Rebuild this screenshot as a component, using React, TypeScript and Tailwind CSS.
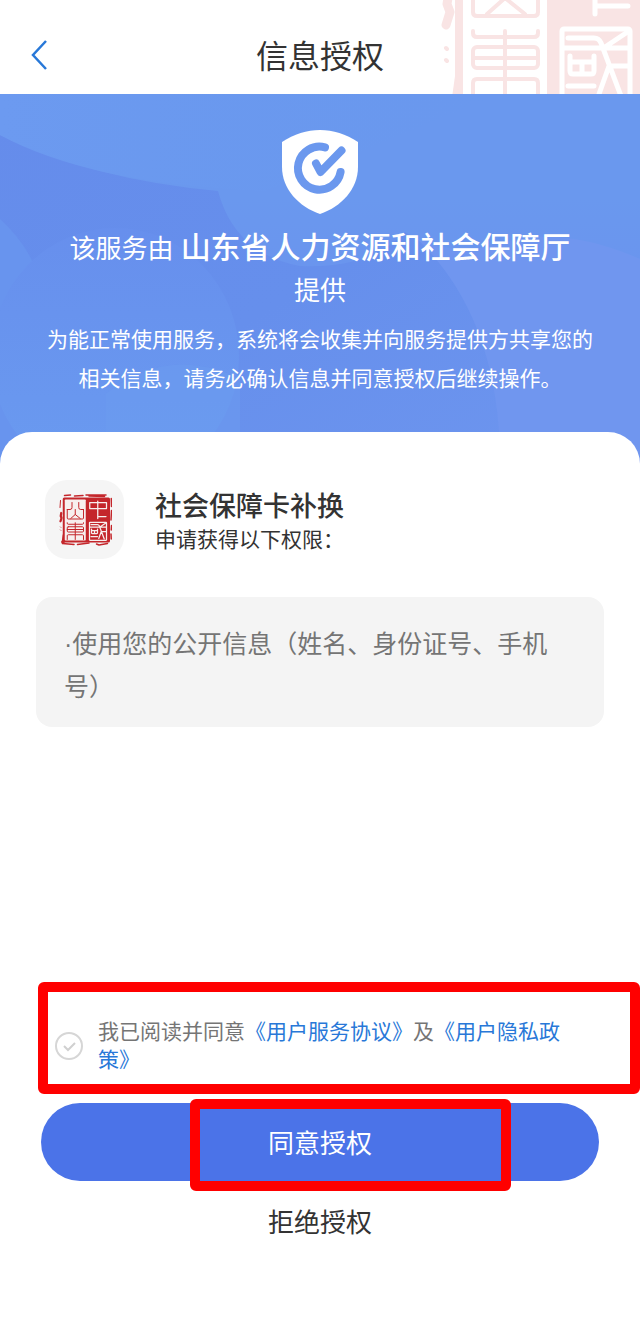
type SealProps = {
  ink: string;
  paper: string;
  className: string;
};

const Seal = ({ ink, paper, className }: SealProps) => {
  return (
    <svg viewBox="436 -84 216 208" className={className} aria-hidden="true">
      {/* worn outer edge */}
      <g fill="none" stroke={ink} strokeLinecap="round" strokeLinejoin="round">
        <path d="M446 -58L444 -30M446 48L447 49M446 60L447 61" strokeWidth="4" />
        <path d="M449 -8L447 4L450 12L446 25" strokeWidth="9" />
        <path
          d="M462 -78L486 -80M502 -76L536 -78M548 -80L628 -80M560 -76L622 -74"
          strokeWidth="6"
        />
        <path
          d="M649 -66L650 -34M650 -18L648 20M650 42L649 60M648 76L649 96"
          strokeWidth="6"
        />
        <path
          d="M452 106L454 114L500 118M514 118L560 112M590 116L600 120L634 114"
          strokeWidth="6"
        />
      </g>
      <rect x="455" y="-70" width="189" height="180" rx="6" fill={ink} />
      <rect x="463" y="-62" width="84" height="164" rx="3" fill={paper} />
      <path d="M455 76L450 112L463 112Z" fill={ink} />
      {/* left column */}
      <g
        fill="none"
        stroke={ink}
        strokeWidth="4"
        strokeLinecap="round"
        strokeLinejoin="round"
      >
        <path d="M473 -22V12Q473 16 477 16H534Q538 16 538 12V-22M473 -22H484Q492 -22 492 -30V-50M538 -22H527Q519 -22 519 -30V-50" />
        <path d="M487 14L505 -2L525 14M505 -2V-22" />
        <path d="M473 31V33Q473 37 477 37H534Q538 37 538 33V31" />
        <rect x="473" y="47" width="65" height="21" rx="4" />
        <path d="M473 58H538M505 31V98" />
        <path d="M473 98V83Q473 79 477 79H534Q538 79 538 83V98" />
      </g>
      {/* right column */}
      <g
        fill="none"
        stroke={paper}
        strokeWidth="5"
        strokeLinecap="round"
        strokeLinejoin="round"
      >
        <path d="M563 -50H630V-26H563ZM595 -56V14M595 6H628" />
        <rect x="562" y="29" width="68" height="72" rx="2" />
        <path d="M568 38H594Q599 38 601 43L621 96M564 48H628M626 33L605 47M628 66H612M609 66L599 94" />
        <path d="M570 56V71Q570 74 573 74H591Q594 74 594 71V56M570 62H594M582 62V72M568 86H594" />
      </g>
    </svg>
  );
};

const HeroBackground = () => {
  return (
    <svg
      viewBox="0 0 640 370"
      preserveAspectRatio="none"
      className="absolute inset-0 h-full w-full"
      aria-hidden="true"
    >
      <defs>
        <linearGradient id="dusk" x1="0" y1="0" x2="1" y2="1">
          <stop offset="0" stopColor="#658ceb" />
          <stop offset="0.5" stopColor="#668fec" />
          <stop offset="1" stopColor="#6e96ef" />
        </linearGradient>
        <linearGradient id="fade" x1="0" y1="0" x2="1" y2="0">
          <stop offset="0" stopColor="#6c9af0" />
          <stop offset="1" stopColor="#6898ee" stopOpacity="0" />
        </linearGradient>
        <linearGradient id="pool" x1="0" y1="0" x2="0" y2="1">
          <stop offset="0" stopColor="#678fed" />
          <stop offset="1" stopColor="#6a9bf0" />
        </linearGradient>
        <linearGradient id="sky" x1="0" y1="0" x2="0" y2="1">
          <stop offset="0.6" stopColor="#6a98ee" />
          <stop offset="1" stopColor="#6a95ee" />
        </linearGradient>
      </defs>
      <rect width="640" height="370" fill="url(#dusk)" />
      <path
        d="M400 130Q520 60 640 160V370H500Q500 210 400 130Z"
        fill="#7096ef"
      />
      <path
        d="M0 0H640V165Q560 130 500 150Q450 165 405 138Q370 175 300 172Q235 160 218 97Q90 85 0 41Z"
        fill="url(#sky)"
      />
      <path d="M0 0H500L265 97Q90 90 0 41Z" fill="url(#fade)" />
      <path d="M0 125Q28 150 40 185V370H0Z" fill="#6894ee" />
      <ellipse cx="115" cy="262" rx="124" ry="128" fill="url(#pool)" />
      <path d="M106 370V300Q170 250 240 285V370Z" fill="#6b9bf0" opacity="0.5" />
    </svg>
  );
};

const ShieldIcon = () => {
  return (
    <svg viewBox="0 0 76 85" className="h-[85px] w-[76px]" aria-hidden="true">
      <path
        d="M38 1C51 1 64 5 76 13V38C76 60 59 78 38 85C17 78 0 60 0 38V13C12 5 25 1 38 1Z"
        fill="#fff"
      />
      <g
        fill="none"
        stroke="#6b98ee"
        strokeWidth="8"
        strokeLinecap="round"
        strokeLinejoin="round"
      >
        <path d="M43 18.4A21.5 21.5 0 1 0 58.6 43" />
        <path d="M34 34.5L38.5 43L59.5 21.5" />
      </g>
    </svg>
  );
};

const Header = () => {
  return (
    <header className="relative flex h-[94px] items-center overflow-hidden bg-white pt-5">
      <Seal
        ink="#f9e4e4"
        paper="#ffffff"
        className="absolute -top-[84px] -right-3 h-[208px] w-[216px]"
      />
      <button type="button" aria-label="返回" className="ml-7 h-10 w-10">
        <svg viewBox="0 0 40 40" className="h-10 w-10" aria-hidden="true">
          <path
            d="M18 4L5 18L18 32"
            fill="none"
            stroke="#2878d8"
            strokeWidth="2.5"
          />
        </svg>
      </button>
      <h1 className="relative mr-[68px] flex-1 text-center text-[32px] leading-10 text-[#333333]">
        信息授权
      </h1>
    </header>
  );
};

const Hero = () => {
  return (
    <section className="relative pt-[35px] pb-[66px] text-center text-white">
      <HeroBackground />
      <div className="relative flex flex-col items-center">
        <ShieldIcon />
        <p className="mt-[13px] px-[60px] text-[26px] leading-[42px]">
          该服务由{" "}
          <strong className="text-[30px] font-medium">
            山东省人力资源和社会保障厅
          </strong>{" "}
          提供
        </p>
        <p className="mt-2 px-10 text-[21px] leading-[39px]">
          为能正常使用服务，系统将会收集并向服务提供方共享您的相关信息，请务必确认信息并同意授权后继续操作。
        </p>
      </div>
    </section>
  );
};

const Agreement = () => {
  return (
    <div className="relative ml-[38px] flex items-center pt-9 pr-[65px] pb-5 pl-[17px]">
      <div className="relative h-7 w-7 shrink-0">
        <input
          id="agree"
          type="checkbox"
          className="block h-7 w-7 appearance-none rounded-full border-2 border-[#d6d6d6] bg-white"
        />
        <svg
          viewBox="0 0 28 28"
          className="pointer-events-none absolute inset-0 h-7 w-7"
          aria-hidden="true"
        >
          <path
            d="M9 14L13 18L20 11"
            fill="none"
            stroke="#d0d0d0"
            strokeWidth="2"
          />
        </svg>
      </div>
      <label
        htmlFor="agree"
        className="ml-[15px] text-[21px] leading-7 text-[#757575]"
      >
        我已阅读并同意
        <a href="#service" className="text-[#2878d8]">
          《用户服务协议》
        </a>
        及
        <a href="#privacy" className="text-[#2878d8]">
          《用户隐私政策》
        </a>
      </label>
      <div className="pointer-events-none absolute inset-0 rounded-md border-[10px] border-[#ff0000]"></div>
    </div>
  );
};

const App = () => {
  return (
    <div className="flex min-h-screen flex-col bg-white font-['Liberation_Sans','Noto_Sans_CJK_SC',sans-serif]">
      <Header />
      <Hero />
      <main className="relative -mt-8 flex flex-1 flex-col rounded-t-[32px] bg-white pt-12">
        <div className="flex items-center px-[45px]">
          <div className="flex h-[79px] w-[79px] shrink-0 items-center justify-center rounded-[22px] bg-[#f5f5f5]">
            <Seal
              ink="#c4262b"
              paper="#f7efee"
              className="h-[52px] w-[54px]"
            />
          </div>
          <div className="ml-[31px] pt-1 text-[#333333]">
            <h2 className="text-[27px] leading-9 font-medium">
              社会保障卡补换
            </h2>
            <p className="text-[21px] leading-[30px]">申请获得以下权限：</p>
          </div>
        </div>
        <p className="mx-9 mt-[38px] rounded-2xl bg-[#f4f4f4] px-7 pt-[26px] pb-[18px] text-[25px] leading-[43px] text-[#757575]">
          ·使用您的公开信息（姓名、身份证号、手机号）
        </p>
        <footer className="mt-auto pt-10 pb-20">
          <Agreement />
          <div className="relative mx-[41px] mt-[9px]">
            <button
              type="button"
              className="block h-[78px] w-full rounded-full bg-[#4b73e8] pt-1 text-[26px] text-white"
            >
              同意授权
            </button>
            <div className="pointer-events-none absolute -top-1 right-[88px] -bottom-[10px] left-[149px] rounded-md border-[10px] border-[#ff0000]"></div>
          </div>
          <button
            type="button"
            className="mx-auto mt-[22px] block h-10 text-[26px] leading-10 text-[#333333]"
          >
            拒绝授权
          </button>
        </footer>
      </main>
    </div>
  );
};

export default App;
